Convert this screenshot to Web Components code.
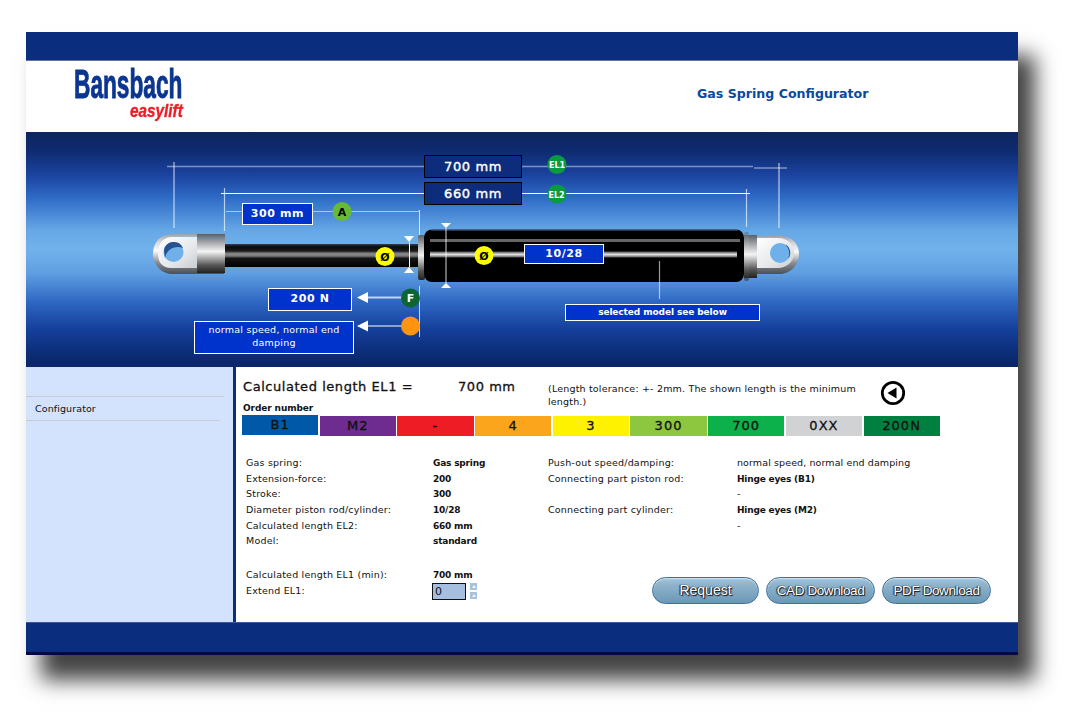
<!DOCTYPE html>
<html><head><meta charset="utf-8">
<style>
html,body{margin:0;padding:0;background:#fff;}
body{font-family:"DejaVu Sans",sans-serif;font-size:9.5px;color:#111;height:725px;overflow:hidden;}
</style></head>
<body>
<gs-app>
  <gs-header slot="header" title-text="Gas Spring Configurator"></gs-header>
  <gs-hero slot="hero"></gs-hero>
  <gs-sidebar slot="side"><span>Configurator</span></gs-sidebar>
  <gs-main slot="main"></gs-main>
</gs-app>
<script>
function def(name, css, html, extra){
  const t=document.createElement('template');
  t.innerHTML='<style>'+css+'</style>'+html;
  customElements.define(name,class extends HTMLElement{
    constructor(){super();this.attachShadow({mode:'open'}).appendChild(t.content.cloneNode(true));if(extra)extra.call(this,this.shadowRoot);}
  });
}
def('gs-app',`
:host{display:block;width:992px;margin:32px 0 0 26px;height:623px;box-shadow:16px 24px 20px 1px #444;background:#0a2d7e;}
.wrap{display:flex;flex-direction:column;height:623px;}
.bar{height:28px;background:#0a2d7e;flex:none;border-bottom:1px solid #6a6f98;}
.body{display:flex;height:254px;flex:none;background:#fff;border-top:1px solid #fff;}
.foot{flex:1;background:#0a2d7e;border-top:1px solid #3a5aa0;border-bottom:3px solid #020845;}
`,`<div class="wrap"><div class="bar"></div><slot name="header"></slot><slot name="hero"></slot>
<div class="body"><slot name="side"></slot><slot name="main"></slot></div><div class="foot"></div></div>`);

def('gs-header',`
:host{display:flex;height:71px;background:#fff;flex:none;position:relative;}
.logo{margin:1px 0 0 48px;width:110px;height:68px;display:flex;flex-direction:column;font-family:"Liberation Sans",sans-serif;font-weight:700;white-space:nowrap;}
.b{display:block;font-size:40px;line-height:44px;height:44px;width:108px;color:#0a3590;-webkit-text-stroke:.9px #0a3590;transform:scaleX(.567);transform-origin:0 0;}
.e{display:block;font-size:17.5px;line-height:20px;height:20px;margin:-5px 0 0 56px;width:54px;font-style:italic;color:#ee1c25;-webkit-text-stroke:.35px #ee1c25;transform:scaleX(.875);transform-origin:0 0;}
h1{margin:0;position:absolute;left:671px;top:25px;font:bold 12.6px "DejaVu Sans",sans-serif;color:#0a4a9c;}
`,`<div class="logo"><span class="b">Bansbach</span><span class="e">easylift</span></div><h1></h1>`,
function(r){queueMicrotask(()=>{r.querySelector('h1').textContent=this.getAttribute('title-text')})});

def('gs-label',`
:host{position:absolute;display:flex;align-items:center;justify-content:center;box-sizing:border-box;background:#0033cc;border:1px solid #fff;color:#fff;font:bold 11px "DejaVu Sans",sans-serif;letter-spacing:.6px;text-align:center;padding-bottom:2px;}
`,`<slot></slot>`);

def('gs-hero',`
:host{display:block;position:relative;height:235px;flex:none;overflow:hidden;
background:linear-gradient(180deg,#0e2560 0,#0e2b70 8%,#1a429e 18%,#2e6bc6 28%,#66a8e6 42%,#72b2ec 50%,#5f9fe2 60%,#2f68c4 72%,#143f9a 84%,#0b2a70 96%,#0b2568 100%);}
svg{position:absolute;left:0;top:0;}
.el{background:#0d2d7c;border-color:#000;font-size:13px;font-weight:400;-webkit-text-stroke:.4px #fff;padding-bottom:0;}
.sp{font-weight:400;font-size:9.5px;line-height:13px;letter-spacing:.25px;padding:0 4px 4px;}
.sel{font-size:9px;letter-spacing:-.1px;padding-bottom:1px;}
`,`<svg width="992" height="235" viewBox="26 132 992 235">
<defs>
<linearGradient id="rod" x1="0" y1="0" x2="0" y2="1"><stop offset="0" stop-color="#39404e"/><stop offset=".12" stop-color="#0b0b0b"/><stop offset=".3" stop-color="#1a1a1a"/><stop offset=".42" stop-color="#8a8a8a"/><stop offset=".52" stop-color="#7a7a7a"/><stop offset=".62" stop-color="#151515"/><stop offset="1" stop-color="#000"/></linearGradient>
<linearGradient id="cap" x1="0" y1="0" x2="0" y2="1"><stop offset="0" stop-color="#9aa2ac"/><stop offset=".2" stop-color="#d6d8da"/><stop offset=".42" stop-color="#fafafa"/><stop offset=".7" stop-color="#8c8f94"/><stop offset="1" stop-color="#4a5058"/></linearGradient>
<linearGradient id="collar" x1="0" y1="0" x2="0" y2="1"><stop offset="0" stop-color="#5a6068"/><stop offset=".45" stop-color="#f4f4f4"/><stop offset=".8" stop-color="#555"/><stop offset="1" stop-color="#222"/></linearGradient>
<linearGradient id="plate" x1="0" y1="0" x2="1" y2="1"><stop offset="0" stop-color="#fff"/><stop offset=".6" stop-color="#e6e8ea"/><stop offset="1" stop-color="#c9ccd0"/></linearGradient>
<linearGradient id="hl" x1="0" y1="0" x2="0" y2="1"><stop offset="0" stop-color="#555"/><stop offset=".5" stop-color="#e0e0e0"/><stop offset="1" stop-color="#555"/></linearGradient>
<filter id="b1"><feGaussianBlur stdDeviation=".7"/></filter>
</defs>
<g stroke="#fff" fill="none">
<path d="M167 166.500H424M522 166.500H753" stroke-opacity=".45" stroke-width="1.500"/>
<path d="M754 168H787" stroke-opacity=".45" stroke-width="1.500"/>
<path d="M174 162V228M779 163V228" stroke-opacity=".55" stroke-width="1.500"/>
<path d="M221 193.500H424M522 193.500H750"/>
<path d="M224.500 188V231M746.500 189V227" stroke-opacity=".65" stroke-width="1.200"/>
<path d="M226 211.500H242M313 211.500H419" stroke-opacity=".55" stroke-width="1.200"/>
<path d="M419.500 210V235M419.500 286V337" stroke-opacity=".75"/>
</g>
<path d="M224 234H172C160 234 153 243 153 253.500C153 264 161 274 172 274H224Z" fill="url(#cap)"/>
<path d="M165 237H197V268H172C160 268 158 260 158 253C158 243 164 237 172 237Z" fill="url(#plate)"/>
<circle cx="173.500" cy="252" r="10" fill="#6fb0ea"/><path d="M164 250A10 10 0 0 1 183 248 A13 13 0 0 0 165 258Z" fill="#27528f"/>
<rect x="197" y="234" width="28" height="39" fill="url(#collar)"/>
<rect x="225" y="244" width="194" height="23" fill="url(#rod)"/>
<rect x="418" y="235" width="7" height="45" rx="2" fill="url(#collar)"/>
<rect x="424" y="229.500" width="320" height="52.500" rx="8" fill="#000"/>
<path d="M431 230H738" stroke="#4f6f9f" stroke-width="1"/>
<rect x="430" y="239" width="310" height="3" fill="#666" filter="url(#b1)"/>
<rect x="430" y="251.500" width="307" height="6" fill="url(#hl)" filter="url(#b1)"/>
<path d="M757 236H780C792 236 799 244 799 254C799 265 790 274 780 274H757Z" fill="url(#cap)"/>
<path d="M757 238H778C788 238 794 245 794 253C794 262 786 268 778 268H757Z" fill="url(#plate)"/>
<circle cx="780" cy="253" r="10" fill="#6fb0ea"/><path d="M785 244A10 10 0 0 1 788 259A14 14 0 0 0 785 244Z" fill="#27528f"/>
<rect x="744" y="235" width="13" height="43" fill="url(#collar)"/>
<rect x="744" y="232" width="5" height="49" rx="2" fill="url(#collar)" opacity=".5"/>
<g fill="#fff">
<path d="M404 236H414L409 242Z"/><path d="M404 273H414L409 267Z"/>
<path d="M441 223H451L446 228Z"/><path d="M441 288H451L446 283Z"/>
<path d="M357 297.500L368 292V303Z"/><path d="M357 326L368 320.500V331.500Z"/>
</g>
<g stroke="#fff">
<path d="M409.500 242V267" />
<path d="M446 228V283" stroke-opacity=".7" stroke-width="1.200"/>
<path d="M366 297.500H402" stroke-opacity=".7" stroke-width="2"/>
<path d="M366 326H402"/>
<path d="M659.500 261V299" stroke-opacity=".6" stroke-width="1.200"/>
</g>
<g font-family="DejaVu Sans" font-weight="700" text-anchor="middle">
<circle cx="342" cy="211.500" r="9.500" fill="#66bb33"/><text x="342" y="215.500" font-size="11" fill="#000">A</text>
<circle cx="385" cy="256.500" r="9.500" fill="#ffff00"/><text x="385" y="260.500" font-size="11" fill="#000">Ø</text>
<circle cx="484" cy="255.500" r="9.500" fill="#ffff00"/><text x="484" y="259.500" font-size="11" fill="#000">Ø</text>
<circle cx="410.500" cy="298" r="9.500" fill="#0d6533"/><text x="410.500" y="302" font-size="11" fill="#fff">F</text>
<circle cx="410.500" cy="326" r="9.500" fill="#ff9410"/>
<circle cx="557" cy="164.500" r="9.500" fill="#0a9a40"/><text x="557" y="168" font-size="8" fill="#fff">EL1</text>
<circle cx="557" cy="194" r="9.500" fill="#0a9a40"/><text x="556.500" y="197.500" font-size="8" fill="#fff">EL2</text>
</g>
</svg>
<gs-label class="el" style="left:398px;top:23px;width:98px;height:23px">700 mm</gs-label>
<gs-label class="el" style="left:398px;top:50px;width:98px;height:23px">660 mm</gs-label>
<gs-label style="left:216px;top:71px;width:71px;height:22px">300 mm</gs-label>
<gs-label style="left:498px;top:112px;width:80px;height:20px">10/28</gs-label>
<gs-label style="left:242px;top:156px;width:84px;height:23px">200 N</gs-label>
<gs-label class="sp" style="left:168px;top:189px;width:160px;height:33px">normal speed, normal end damping</gs-label>
<gs-label class="sel" style="left:539px;top:172px;width:195px;height:17px">selected model see below</gs-label>
`);

def('gs-sidebar',`
:host{display:block;width:207px;flex:none;background:#d3e3fe;border-right:3px solid #0a2d7e;padding-top:30px;box-sizing:content-box;margin:-1px 0 0;}
.item{height:23px;padding-left:9px;display:flex;align-items:center;letter-spacing:.1px;font-size:9.5px;position:relative;border-bottom:1px solid #c8cbd0;margin-right:13px;}
.item::before{content:"";position:absolute;left:0;right:-4px;top:-1px;height:1px;background:#c8cbd0;}
`,`<div class="item"><slot></slot></div>`);

def('gs-seg',`:host{display:flex;align-items:center;justify-content:center;height:20px;padding-bottom:2px;box-sizing:border-box;font:13px "DejaVu Sans",sans-serif;color:#111;letter-spacing:1px;-webkit-text-stroke:.3px #111;}`,`<slot></slot>`);

def('gs-btn',`
:host{display:flex;align-items:center;justify-content:center;box-sizing:border-box;height:27px;padding-bottom:1px;border-radius:14px;border:1px solid #3f7099;
background:linear-gradient(180deg,#a9c6da 0,#8fb4cc 25%,#6c98b6 100%);box-shadow:inset 0 1px 1px #cfe0ea;
font:14px "Liberation Sans",sans-serif;color:#fff;text-shadow:1px 1px 1px #111,-1px 0 1px #222,0 0 1px #222;}
`,`<slot></slot>`);

def('gs-main',`
:host{display:flex;flex-direction:column;flex:1;position:relative;padding:11px 0 0 7px;box-sizing:border-box;color:#111;}
.top{display:flex;align-items:flex-start;height:29px;}
.t{font-size:13px;letter-spacing:.55px;-webkit-text-stroke:.3px #111;white-space:pre;}
.t1{width:215px}.t2{width:90px}
.note{width:322px;font-size:9.5px;line-height:13px;letter-spacing:.18px;margin-top:3px;}
svg{margin:1px 0 0 10px}
.ord{font-weight:700;font-size:9px;letter-spacing:-.1px;height:11px;line-height:11px;margin-top:-5px;}
.segs{display:grid;grid-template-columns:repeat(9,76.200px);column-gap:1.500px;margin:2px 0 0 -1px;}
.grid{display:grid;grid-template-columns:187px 115px 189px 1fr;grid-auto-rows:15.700px;align-items:baseline;margin:19px 0 0 3px;font-size:9.5px;letter-spacing:.2px;line-height:15.700px;white-space:nowrap;}
b{letter-spacing:-.2px;font-size:9px}
.tight{letter-spacing:.1px}
.ext{display:grid;grid-template-columns:187px auto;grid-auto-rows:15.700px;align-items:baseline;margin:18px 0 0 3px;font-size:9.5px;letter-spacing:.2px;line-height:15.700px;}
.inp{display:flex;gap:4px;align-items:center;align-self:start;margin-left:-1px;}
.box{box-sizing:border-box;width:34px;height:17px;background:#a6bedf;border:1px solid #111;font-size:11px;line-height:15px;padding-left:2px;}
.spin{display:flex;flex-direction:column;gap:2px;}
.spin i{display:block;width:7px;height:7px;background:#a8c2d8;position:relative;}
.spin i::after{content:"";position:absolute;left:1.500px;top:2px;border:2px solid transparent;border-top:0;border-bottom:3px solid #eef4f8;}
.btns{position:absolute;left:416px;top:209px;display:grid;grid-template-columns:107px 109px 109px;column-gap:7px;}
.n{font-size:13.5px;letter-spacing:-.4px}
`,`<div class="top"><span class="t t1">Calculated length EL1 =</span><span class="t t2">700 mm</span>
<span class="note">(Length tolerance: +- 2mm. The shown length is the minimum length.)</span>
<svg width="26" height="26" viewBox="0 0 26 26"><circle cx="13" cy="13" r="10.700" fill="#fff" stroke="#000" stroke-width="2.800"/><path d="M7.500 13L16.500 7.500V18.500Z" fill="#000"/></svg></div>
<div class="ord">Order number</div>
<div class="segs">
<gs-seg style="background:#0059a8;margin-top:-1px">B1</gs-seg><gs-seg style="background:#6e2c90">M2</gs-seg><gs-seg style="background:#ee1c25">-</gs-seg><gs-seg style="background:#fba51c">4</gs-seg><gs-seg style="background:#fff200">3</gs-seg><gs-seg style="background:#8dc63f">300</gs-seg><gs-seg style="background:#0db14b">700</gs-seg><gs-seg style="background:#d0d2d3">0XX</gs-seg><gs-seg style="background:#008040">200N</gs-seg>
</div>
<div class="grid">
<span>Gas spring:</span><b>Gas spring</b><span>Push-out speed/damping:</span><span class="tight">normal speed, normal end damping</span>
<span>Extension-force:</span><b>200</b><span>Connecting part piston rod:</span><b>Hinge eyes (B1)</b>
<span>Stroke:</span><b>300</b><span></span><span>-</span>
<span>Diameter piston rod/cylinder:</span><b>10/28</b><span>Connecting part cylinder:</span><b>Hinge eyes (M2)</b>
<span>Calculated length EL2:</span><b>660 mm</b><span></span><span>-</span>
<span>Model:</span><b>standard</b><span></span><span></span>
</div>
<div class="ext"><span>Calculated length EL1 (min):</span><b>700 mm</b>
<span>Extend EL1:</span><div class="inp"><div class="box">0</div><div class="spin"><i></i><i></i></div></div></div>
<div class="btns"><gs-btn>Request</gs-btn><gs-btn class="n">CAD Download</gs-btn><gs-btn class="n">PDF Download</gs-btn></div>
`);
</script>
</body></html>
